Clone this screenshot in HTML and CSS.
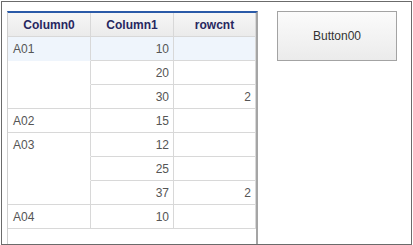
FILE: index.html
```html
<!DOCTYPE html>
<html lang="en">
<head>
  <meta charset="UTF-8">
  <title>Grid Merge Test</title>
  <link rel="stylesheet" href="styles.css">
</head>
<body>
  <div class="frame">
    <div class="grid-wrap">
      <table class="grid">
        <thead>
          <tr>
            <th class="c0">Column0</th>
            <th class="c1">Column1</th>
            <th class="c2">rowcnt</th>
          </tr>
        </thead>
        <tbody>
          <tr class="selected">
            <td class="grp">A01</td>
            <td class="num">10</td>
            <td class="num"></td>
          </tr>
          <tr>
            <td class="grp"></td>
            <td class="num">20</td>
            <td class="num"></td>
          </tr>
          <tr>
            <td></td>
            <td class="num">30</td>
            <td class="num">2</td>
          </tr>
          <tr>
            <td>A02</td>
            <td class="num">15</td>
            <td class="num"></td>
          </tr>
          <tr>
            <td class="grp">A03</td>
            <td class="num">12</td>
            <td class="num"></td>
          </tr>
          <tr>
            <td class="grp"></td>
            <td class="num">25</td>
            <td class="num"></td>
          </tr>
          <tr>
            <td></td>
            <td class="num">37</td>
            <td class="num">2</td>
          </tr>
          <tr>
            <td>A04</td>
            <td class="num">10</td>
            <td class="num"></td>
          </tr>
        </tbody>
      </table>
    </div>
    <button class="btn" type="button">Button00</button>
  </div>
</body>
</html>
```

FILE: styles.css
```css
body {
  margin: 0;
  font-family: "Liberation Sans", Arial, sans-serif;
  font-size: 12px;
  background: #fff;
}

.frame {
  margin: 1px 0 0 1px;
  width: 404px;
  height: 233px;
  border: 1px solid #6b6b6b;
  padding: 9px 0 0 5px;
  display: flex;
  align-items: flex-start;
  gap: 19px;
  overflow: hidden;
}

.grid-wrap {
  width: 248px;
  height: 231px;
  border-top: 2px solid #2a5aa8;
  border-left: 1px solid #cfcfcf;
  border-right: 2px solid #a5a5a5;
  overflow: hidden;
  flex-shrink: 0;
}

.grid {
  border-collapse: separate;
  border-spacing: 0;
  table-layout: fixed;
  width: 248px;
}

.grid th,
.grid td {
  box-sizing: border-box;
  height: 24px;
  padding: 0 4px 0 5px;
  border-right: 1px solid #d8d8d8;
  border-bottom: 1px solid #d8d8d8;
  white-space: nowrap;
}

.grid th {
  background: linear-gradient(#f6f6f6, #ebebeb);
  color: #27275f;
  font-weight: bold;
  text-align: center;
  padding: 0;
}

.grid .c0,
.grid .c1 {
  width: 83px;
}

.grid .c2 {
  width: 82px;
}

.grid td {
  color: #555;
  text-align: left;
}

.grid td.num {
  text-align: right;
}

/* merged group cells: hide the line between rows */
.grid td.grp {
  border-bottom-color: transparent;
}

.grid tr.selected td {
  background: #eff5fc;
}

.btn {
  width: 120px;
  height: 50px;
  padding: 0;
  border: 1px solid #a3a3a3;
  background: linear-gradient(#fbfbfb, #ebebeb);
  color: #333;
  font-family: "Liberation Sans", Arial, sans-serif;
  font-size: 12px;
  flex-shrink: 0;
}
```
